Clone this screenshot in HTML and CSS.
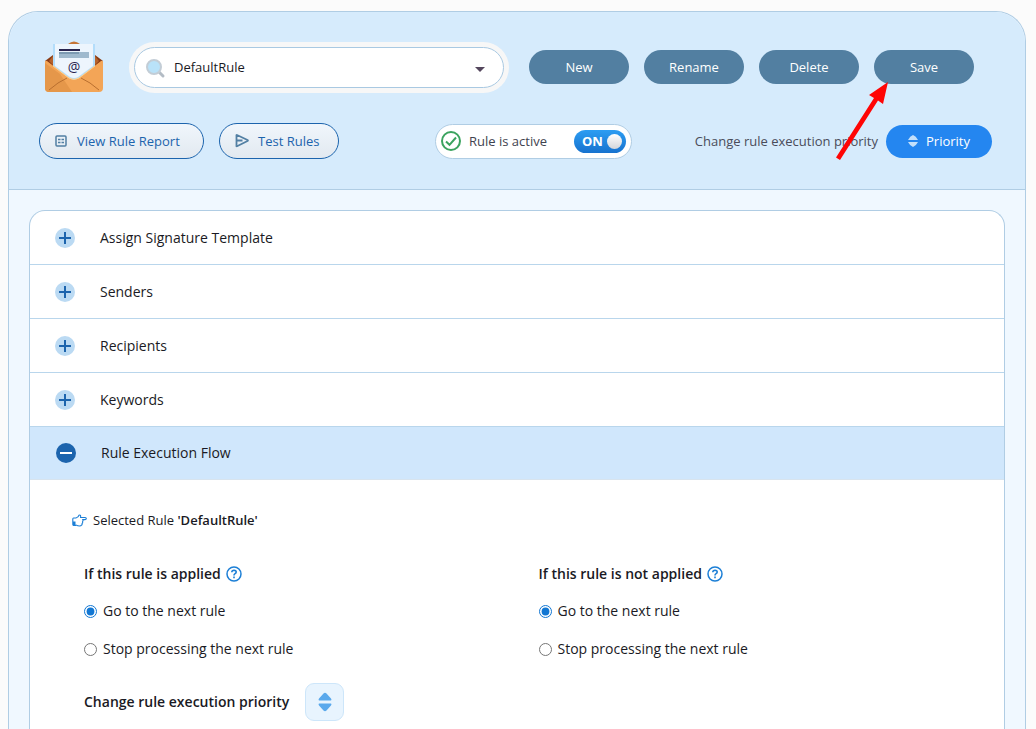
FILE: index.html
```html
<!DOCTYPE html>
<html lang="en">
<head>
    <meta charset="UTF-8">
    <meta name="viewport" content="width=device-width, initial-scale=1.0">
    <title>Signature Rules</title>
    <link rel="stylesheet" href="styles.css">
</head>
<body>
    <main class="panel">
        <header class="toolbar">
            <div class="toolbar-row">
                <svg class="logo" width="60" height="52" viewBox="0 0 60 52" aria-hidden="true">
                    <path d="M1 20 L9 14 H51 L59 20 L30 42 Z" fill="#8a3b14"/>
                    <path d="M5 20 L9 15 V24 Z M55 20 L51 15 V24 Z" fill="#b5622c"/>
                    <path d="M24 3 Q30 -2 36 3 Z" fill="#c47436"/>
                    <path d="M9 3 H51 V26 L35 38 Q30 41 25 38 L9 26 Z" fill="#b3ddfb"/>
                    <path d="M11 3 H49 V25 L34 36 Q30 38 26 36 L11 25 Z" fill="#edf5fd"/>
                    <rect x="15" y="8" width="21" height="2" fill="#28244f"/>
                    <rect x="15" y="11" width="30" height="6" fill="#9fb9cd"/>
                    <rect x="15" y="11" width="20" height="2" fill="#7c9ab2"/>
                    <path d="M1 21 Q1 19 3 20 L25 37 Q30 40 35 37 L57 20 Q59 19 59 21 V47 Q59 51 55 51 H5 Q1 51 1 47 Z" fill="#f3a557"/>
                    <path d="M1 22 L16 33 L28 51 H5 Q1 51 1 47 Z" fill="#e5974a"/>
                    <path d="M5 49 Q14 41 23 37 M55 49 Q46 41 37 37" fill="none" stroke="#b96f2f" stroke-width="1"/>
                    <path d="M9 25 L25 37 Q30 40 35 37 L51 25" fill="none" stroke="#ffd391" stroke-width="1"/>
                    <text x="30" y="31" text-anchor="middle" class="logo-at">@</text>
                </svg>
                <div class="picker">
                    <svg class="picker-icon" width="20" height="20" viewBox="0 0 20 20" aria-hidden="true">
                        <path d="M13 13 L17 17" stroke="#b3bcc5" stroke-width="3" stroke-linecap="round"/>
                        <circle cx="8" cy="8" r="7" fill="#b9e2f9" stroke="#c3cdd6" stroke-width="2"/>
                    </svg>
                    <select class="picker-select" aria-label="Rule">
                        <option>DefaultRule</option>
                    </select>
                    <svg class="picker-caret" width="10" height="5" viewBox="0 0 10 5" aria-hidden="true">
                        <path d="M0 0 H10 L5 5 Z" fill="#54465d"/>
                    </svg>
                </div>
                <div class="actions">
                    <button class="btn" type="button">New</button>
                    <button class="btn" type="button">Rename</button>
                    <button class="btn" type="button">Delete</button>
                    <button class="btn" type="button">Save</button>
                </div>
            </div>
            <div class="toolbar-row">
                <div class="actions">
                    <button class="btn-outline btn-report" type="button">
                        <svg width="12" height="12" viewBox="0 0 12 12" aria-hidden="true">
                            <rect x="1" y="1" width="10" height="10" rx="1" fill="none" stroke="#527fa3" stroke-width="1.5"/>
                            <path d="M3 4.5 H5.5 M6.5 4.5 H9 M3 7.5 H5.5 M6.5 7.5 H9" stroke="#527fa3" stroke-width="1.5"/>
                        </svg>
                        View Rule Report
                    </button>
                    <button class="btn-outline btn-test" type="button">
                        <svg width="14" height="14" viewBox="0 0 14 14" aria-hidden="true">
                            <path d="M1.5 1.5 Q1.2 0.8 2 1 L12.5 6 Q13.4 6.5 12.5 7 L2 12.2 Q1.2 12.5 1.5 11.5 Z M1.5 6.5 H7.5" fill="none" stroke="#527fa3" stroke-width="1.8" stroke-linejoin="round"/>
                        </svg>
                        Test Rules
                    </button>
                </div>
                <label class="active-pill">
                    <svg width="20" height="20" viewBox="0 0 20 20" aria-hidden="true">
                        <circle cx="10" cy="10" r="9" fill="none" stroke="#3ba35f" stroke-width="2"/>
                        <path d="M5 10.5 L8.5 13.8 L15 6.5" fill="none" stroke="#3ba35f" stroke-width="2"/>
                    </svg>
                    Rule is active
                    <span class="switch">
                        <input class="switch-input" type="checkbox" checked>
                        <span class="switch-text">ON</span>
                    </span>
                </label>
                <div class="priority">
                    <span>Change rule execution priority</span>
                    <button class="btn-priority" type="button">
                        <svg width="10" height="12" viewBox="0 0 10 12" aria-hidden="true">
                            <path d="M0 5 Q2 1 5 0 Q8 1 10 5 Z M0 7 H10 Q8 11 5 12 Q2 11 0 7 Z" fill="#c3e0fb"/>
                        </svg>
                        Priority
                    </button>
                </div>
            </div>
            <!-- pointer to the Save button -->
            <svg class="pointer" width="54" height="80" viewBox="0 0 54 80" aria-hidden="true">
                <path d="M52 0 L47 22 L42 18.5 L4 78 L0 75.5 L38 16 L33 13 Z" fill="#ff0505"/>
            </svg>
        </header>

        <section class="rules">
            <button class="rule-head" type="button" aria-expanded="false">
                <svg width="20" height="20" viewBox="0 0 20 20" aria-hidden="true"><circle cx="10" cy="10" r="10" fill="#bbdaf3"/><path d="M4 10 H16 M10 4 V16" stroke="#1c64ad" stroke-width="2"/></svg>
                Assign Signature Template
            </button>
            <button class="rule-head" type="button" aria-expanded="false">
                <svg width="20" height="20" viewBox="0 0 20 20" aria-hidden="true"><circle cx="10" cy="10" r="10" fill="#bbdaf3"/><path d="M4 10 H16 M10 4 V16" stroke="#1c64ad" stroke-width="2"/></svg>
                Senders
            </button>
            <button class="rule-head" type="button" aria-expanded="false">
                <svg width="20" height="20" viewBox="0 0 20 20" aria-hidden="true"><circle cx="10" cy="10" r="10" fill="#bbdaf3"/><path d="M4 10 H16 M10 4 V16" stroke="#1c64ad" stroke-width="2"/></svg>
                Recipients
            </button>
            <button class="rule-head" type="button" aria-expanded="false">
                <svg width="20" height="20" viewBox="0 0 20 20" aria-hidden="true"><circle cx="10" cy="10" r="10" fill="#bbdaf3"/><path d="M4 10 H16 M10 4 V16" stroke="#1c64ad" stroke-width="2"/></svg>
                Keywords
            </button>
            <button class="rule-head rule-head-open" type="button" aria-expanded="true">
                <svg width="20" height="20" viewBox="0 0 20 20" aria-hidden="true"><circle cx="10" cy="10" r="10" fill="#1c64ad"/><path d="M4 10 H16" stroke="#fff" stroke-width="2"/></svg>
                Rule Execution Flow
            </button>

            <div class="rule-body">
                <p class="selected-rule">
                    <svg width="15" height="13" viewBox="0 0 15 13" aria-hidden="true">
                        <path d="M4 4 Q6.5 3.5 7 1.2 Q9 0.3 8.6 3.5 H13 Q14.3 3.7 14.3 4.6 Q14.2 5.6 13 5.6 H10.8 Q11.4 6.8 10.6 7.6 Q11 8.8 10.1 9.5 Q10.4 10.8 9.4 11.2 Q9 12 7.6 12 Q5.8 12 4 11" fill="none" stroke="#1c7fd6" stroke-width="1.1"/>
                        <path d="M4 4 H1.5 Q0.8 4 0.8 5 V10.5 Q0.8 11.4 1.5 11.4 H4" fill="none" stroke="#1c7fd6" stroke-width="1.1"/>
                        <rect x="1" y="7.5" width="2.5" height="4" fill="#1c7fd6"/>
                    </svg>
                    <span>Selected Rule <b>'DefaultRule'</b></span>
                </p>
                <div class="flow">
                    <fieldset class="choice">
                        <legend class="choice-title">If this rule is applied
                            <svg width="16" height="16" viewBox="0 0 16 16" aria-hidden="true"><circle cx="8" cy="8" r="7" fill="none" stroke="#1c7fd6" stroke-width="1.5"/><path d="M5.8 6.3 Q5.9 4.3 8 4.3 Q10.2 4.4 10.2 6.1 Q10.2 7.2 8.8 7.9 Q8 8.4 8 9.5 M8 10.6 V12.2" fill="none" stroke="#1c7fd6" stroke-width="1.6"/></svg>
                        </legend>
                        <label class="option"><input type="radio" name="applied" checked>Go to the next rule</label>
                        <label class="option"><input type="radio" name="applied">Stop processing the next rule</label>
                    </fieldset>
                    <fieldset class="choice">
                        <legend class="choice-title">If this rule is not applied
                            <svg width="16" height="16" viewBox="0 0 16 16" aria-hidden="true"><circle cx="8" cy="8" r="7" fill="none" stroke="#1c7fd6" stroke-width="1.5"/><path d="M5.8 6.3 Q5.9 4.3 8 4.3 Q10.2 4.4 10.2 6.1 Q10.2 7.2 8.8 7.9 Q8 8.4 8 9.5 M8 10.6 V12.2" fill="none" stroke="#1c7fd6" stroke-width="1.6"/></svg>
                        </legend>
                        <label class="option"><input type="radio" name="not-applied" checked>Go to the next rule</label>
                        <label class="option"><input type="radio" name="not-applied">Stop processing the next rule</label>
                    </fieldset>
                </div>
                <div class="change-priority">
                    <span>Change rule execution priority</span>
                    <button class="btn-square" type="button" aria-label="Change rule execution priority">
                        <svg width="14" height="20" viewBox="0 0 14 20" aria-hidden="true">
                            <path d="M1 8.5 Q0 8 1 6.5 L5.5 1.5 Q7 0 8.5 1.5 L13 6.5 Q14 8 13 8.5 Z M1 11.5 H13 Q14 12 13 13.5 L8.5 18.5 Q7 20 5.5 18.5 L1 13.5 Q0 12 1 11.5 Z" fill="#5aa9ec"/>
                        </svg>
                    </button>
                </div>
            </div>
        </section>
    </main>
</body>
</html>
```

FILE: styles.css
```css
* {
    box-sizing: border-box;
}
body {
    display: flex;
    flex-direction: column;
    min-height: 100vh;
    margin: 0;
    padding: 11px 10px 0 8px;
    background: #fbfbfb;
    color: #1a1a24;
    font-family: "Segoe UI", "Open Sans", "Noto Sans", sans-serif;
    font-size: 14px;
    line-height: 20px;
}
button, select, input {
    font: inherit;
    margin: 0;
}
svg {
    flex-shrink: 0;
}
.panel {
    flex: 1;
    display: flex;
    flex-direction: column;
    border: 1px solid #b0cde4;
    border-bottom: 0;
    border-radius: 30px 30px 0 0;
    background: #f0f8ff;
}

/* toolbar */
.toolbar {
    position: relative;
    display: flex;
    flex-direction: column;
    gap: 30px;
    padding: 29px 33px 30px 30px;
    border-bottom: 1px solid #b0cde4;
    border-radius: 30px 30px 0 0;
    background: #d6ebfc;
    font-size: 13px;
}
.toolbar-row {
    display: flex;
    align-items: center;
}
.logo {
    margin: 0 25px 0 5px;
}
.logo-at {
    font-size: 14px;
    fill: #28244f;
}
.picker {
    flex: 1;
    position: relative;
    padding: 5px;
    border-radius: 26px;
    background: #f7f7f7;
}
.picker-select {
    display: block;
    width: 100%;
    height: 41px;
    padding: 0 40px 0 39px;
    appearance: none;
    border: 1px solid #a9c9e2;
    border-radius: 21px;
    background: #fff;
    color: #1a1a24;
}
.picker-icon {
    position: absolute;
    left: 17px;
    top: 17px;
}
.picker-caret {
    position: absolute;
    right: 24px;
    top: 25px;
    pointer-events: none;
}
.actions {
    display: flex;
    gap: 15px;
}
.picker + .actions {
    margin: 0 18px 0 20px;
}
.btn {
    width: 100px;
    height: 34px;
    padding: 0;
    border: 0;
    border-radius: 17px;
    background: #527fa1;
    color: #fff;
}
.btn-outline {
    display: flex;
    align-items: center;
    height: 36px;
    padding: 0 15px;
    border: 1px solid #1c64ad;
    border-radius: 18px;
    background: linear-gradient(#f0f6fc, #e2e9f0);
    color: #1c64ad;
    white-space: nowrap;
}
.btn-report {
    gap: 10px;
    width: 165px;
}
.btn-test {
    gap: 9px;
    width: 120px;
}
.active-pill {
    display: flex;
    align-items: center;
    gap: 8px;
    width: 197px;
    height: 35px;
    margin: 0 auto 0 96px;
    padding: 0 5px;
    border: 1px solid #b0cde4;
    border-radius: 18px;
    background: #fff;
    color: #3f4350;
}
.switch {
    position: relative;
    margin-left: auto;
}
.switch-input {
    display: flex;
    align-items: center;
    justify-content: flex-end;
    width: 52px;
    height: 23px;
    padding: 0 4px;
    appearance: none;
    border-radius: 12px;
    background: linear-gradient(#2d9df2, #1672cf);
}
.switch-input::before {
    content: "";
    width: 15px;
    height: 15px;
    border-radius: 50%;
    background: linear-gradient(#fff, #d3d6da);
}
.switch-text {
    position: absolute;
    left: 8px;
    top: 1px;
    color: #fff;
    font-weight: 700;
}
.priority {
    display: flex;
    align-items: center;
    gap: 8px;
    color: #4a4c5a;
}
.btn-priority {
    display: flex;
    align-items: center;
    justify-content: center;
    gap: 8px;
    width: 106px;
    height: 33px;
    padding: 0;
    border: 0;
    border-radius: 17px;
    background: #2486f0;
    color: #fff;
}
.pointer {
    position: absolute;
    right: 135px;
    top: 70px;
    pointer-events: none;
}

/* rules accordion */
.rules {
    flex: 1;
    margin: 20px 20px 0;
    border: 1px solid #b0cde4;
    border-bottom: 0;
    border-radius: 16px 16px 0 0;
    background: #fff;
}
.rule-head {
    display: flex;
    align-items: center;
    gap: 25px;
    width: 100%;
    height: 54px;
    padding: 0 25px;
    border: 0;
    border-bottom: 1px solid #b9d6ec;
    background: none;
    color: #1a1a24;
}
.rule-head-open {
    height: 53px;
    padding: 0 26px;
    border-bottom-color: #d8e4ee;
    background: #d0e7fc;
}
.rule-body {
    padding: 30px 11px 8px 54px;
}
.selected-rule {
    display: flex;
    align-items: center;
    gap: 6px;
    margin: 0 0 34px -12px;
    font-size: 13px;
}
.selected-rule b,
.choice-title,
.change-priority {
    font-weight: 600;
}
.flow {
    display: grid;
    grid-template-columns: 1fr 1fr;
}
.choice {
    display: flex;
    flex-direction: column;
    gap: 18px;
    margin: 0;
    padding: 0;
    border: 0;
}
.choice-title {
    display: flex;
    align-items: center;
    gap: 5px;
    margin-bottom: 17px;
    padding: 0;
}
.option {
    display: flex;
    align-items: center;
    gap: 6px;
}
.option input {
    width: 13px;
    height: 13px;
    accent-color: #1277d3;
}
.change-priority {
    display: flex;
    align-items: center;
    gap: 16px;
    margin-top: 24px;
}
.btn-square {
    display: flex;
    align-items: center;
    justify-content: center;
    width: 39px;
    height: 38px;
    padding: 0;
    border: 1px solid #cde6fa;
    border-radius: 9px;
    background: #e8f4fe;
}
```
